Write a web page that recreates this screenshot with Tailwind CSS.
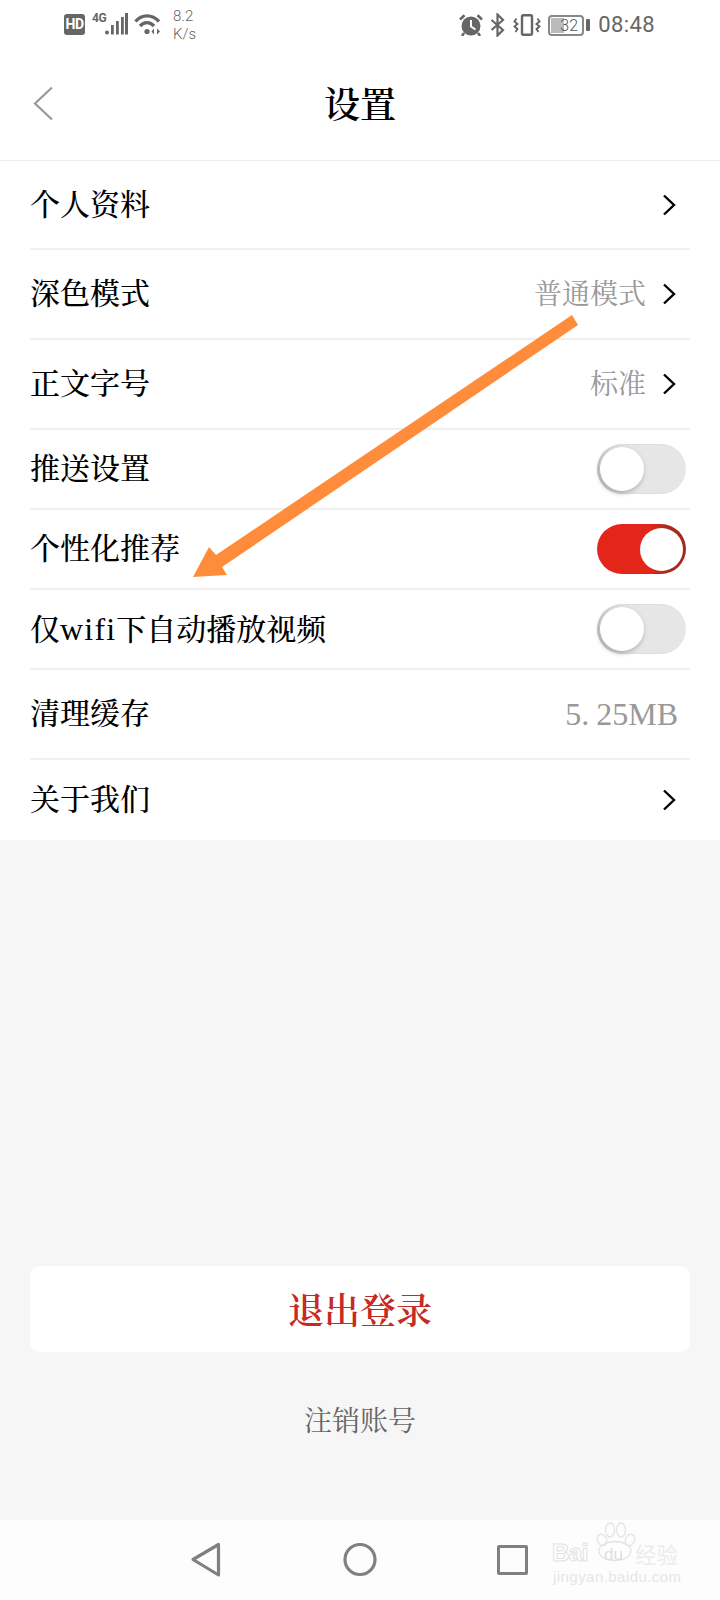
<!DOCTYPE html>
<html lang="zh">
<head>
<meta charset="utf-8">
<script src="https://cdn.jsdelivr.net/npm/@tailwindcss/browser@4"></script>
</head>
<body class="m-0">
<div class="relative w-[720px] h-[1600px] flex flex-col overflow-hidden bg-[#f6f6f6] font-['Liberation_Serif','Noto_Serif_CJK_SC','Noto_Sans_CJK_SC',serif] text-black">

  <!-- status bar -->
  <div class="h-[54px] bg-white flex items-start pt-[7px] text-[#666] font-['Roboto',sans-serif]">
    <div class="ml-[64px] flex items-start">
      <div class="mt-[7px] w-[21px] h-[21px] rounded-[3px] bg-[#666] text-white text-[14px] font-bold leading-[21px] text-center tracking-[-0.5px]">HD</div>
      <div class="ml-[7px] mt-[5px] w-[13px] text-[12px] leading-[13px] font-bold tracking-[-0.3px]">4G</div>
      <svg class="mt-[6px]" width="23" height="22" viewBox="13 0 23 22" fill="#666">
        <circle cx="15" cy="19.5" r="2"/>
        <rect x="19" y="12" width="2.8" height="9.5"/>
        <rect x="24" y="8" width="2.8" height="13.5"/>
        <rect x="29" y="4" width="2.8" height="17.5"/>
        <rect x="33" y="0" width="3" height="21.5"/>
      </svg>
      <svg class="ml-[6px] mt-[6px]" width="27" height="22" viewBox="0 0 27 22" fill="none" stroke="#666" stroke-width="3.4">
        <path d="M1.5 8.5 C8 1 18 1 25 8.5"/>
        <path d="M6 13 C10 8.5 16 8.5 20 13"/>
        <circle cx="13" cy="18.5" r="2.6" fill="#666" stroke="none"/>
        <path d="M20 15.5l-2.5 3 2.5 3zM23 15.5l3 3-3 3z" fill="#666" stroke="none"/>
      </svg>
      <div class="ml-[12px] w-[24px] text-[15px] leading-[18px] font-light">
        <div>8.2</div>
        <div>K/s</div>
      </div>
    </div>
    <div class="ml-auto mr-[65px] flex items-center h-[36px]">
      <svg width="24" height="22" viewBox="0 0 24 22" fill="#666">
        <circle cx="12" cy="12" r="9.5"/>
        <path d="M1 5.5 L5.5 1.2 M23 5.5 L18.5 1.2 M5 19 L3 22 M19 19 L21 22" stroke="#666" stroke-width="2.6" fill="none"/>
        <path d="M12 6V12.5L16.5 15.5" stroke="#fff" stroke-width="2" fill="none"/>
      </svg>
      <svg class="ml-[7px]" width="15" height="24" viewBox="0 0 15 24" fill="none" stroke="#666" stroke-width="2.2">
        <path d="M1.5 7 L13 17 L7.5 22.5 V1.5 L13 7 L1.5 17"/>
      </svg>
      <svg class="ml-[8px]" width="28" height="22" viewBox="0 0 28 22" fill="none" stroke="#666" stroke-width="2.4">
        <rect x="9" y="1.2" width="10" height="19.6" rx="1.5"/>
        <path d="M3.5 4.5 L1.5 7.5 L4.5 10 L1.5 12.5 L4.5 15 L2.5 18 M24.5 4.5 L26.5 7.5 L23.5 10 L26.5 12.5 L23.5 15 L25.5 18" stroke-width="1.9"/>
      </svg>
      <div class="relative ml-[7px] w-[36px] h-[21px] rounded-[4px] border-2 border-[#888]">
        <div class="absolute left-[1px] top-[1px] bottom-[1px] w-[13px] bg-[#bbb]"></div>
        <div class="absolute inset-0 pl-[6px] text-center text-[16px] leading-[17px] font-light text-[#555]">32</div>
      </div>
      <div class="ml-[2px] w-[4px] h-[12px] rounded-[1px] bg-[#666]"></div>
      <div class="ml-[8px] text-[22px] leading-none tracking-[0.4px]">08:48</div>
    </div>
  </div>

  <!-- header -->
  <div class="relative h-[107px] bg-white border-b border-[#eeeeee] flex items-center justify-center">
    <svg class="absolute left-[33px] top-[32px]" width="21" height="35" viewBox="0 0 21 35" fill="none" stroke="#999" stroke-width="2.2">
      <path d="M19 1.5 L2 17.5 L19 33.5"/>
    </svg>
    <div class="text-[36px] leading-none font-semibold mt-[-3px]">设置</div>
  </div>

  <!-- list -->
  <div class="bg-white px-[30px] h-[679px] flex flex-col text-[30px] font-medium">
    <div class="h-[89px] border-b-2 border-[#f0f0f0] flex items-center">
      <span class="leading-none">个人资料</span>
      <svg class="ml-auto mr-[14px]" width="14" height="22" viewBox="0 0 14 22" fill="none" stroke="#000" stroke-width="2.4"><path d="M2 1.5 L12 11 L2 20.5"/></svg>
    </div>
    <div class="h-[90px] border-b-2 border-[#f0f0f0] flex items-center">
      <span class="leading-none">深色模式</span>
      <span class="ml-auto mt-[2px] text-[28px] leading-none font-normal text-[#999]">普通模式</span>
      <svg class="ml-[16px] mr-[14px]" width="14" height="22" viewBox="0 0 14 22" fill="none" stroke="#000" stroke-width="2.4"><path d="M2 1.5 L12 11 L2 20.5"/></svg>
    </div>
    <div class="h-[90px] border-b-2 border-[#f0f0f0] flex items-center">
      <span class="leading-none">正文字号</span>
      <span class="ml-auto mt-[2px] text-[28px] leading-none font-normal text-[#999]">标准</span>
      <svg class="ml-[16px] mr-[14px]" width="14" height="22" viewBox="0 0 14 22" fill="none" stroke="#000" stroke-width="2.4"><path d="M2 1.5 L12 11 L2 20.5"/></svg>
    </div>
    <div class="h-[80px] border-b-2 border-[#f0f0f0] flex items-center">
      <span class="leading-none">推送设置</span>
      <div class="ml-auto mr-[4px] w-[89px] h-[50px] rounded-full bg-[#e6e6e6] shadow-[inset_2px_0_2px_rgba(0,0,0,0.12)] flex items-center">
        <div class="ml-[3px] w-[44px] h-[44px] rounded-full bg-white shadow-[-1px_2px_5px_rgba(0,0,0,0.28)]"></div>
      </div>
    </div>
    <div class="h-[80px] border-b-2 border-[#f0f0f0] flex items-center">
      <span class="leading-none">个性化推荐</span>
      <div class="ml-auto mr-[4px] w-[89px] h-[50px] rounded-full bg-linear-to-r from-[#e4261a] from-60% to-[#a8281e] to-80% flex items-center justify-end">
        <div class="mr-[3px] w-[43px] h-[43px] rounded-full bg-white"></div>
      </div>
    </div>
    <div class="h-[80px] border-b-2 border-[#f0f0f0] flex items-center">
      <span class="leading-none">仅<span class="text-[32px] tracking-[1.2px]">wifi</span>下自动播放视频</span>
      <div class="ml-auto mr-[4px] w-[89px] h-[50px] rounded-full bg-[#e6e6e6] shadow-[inset_2px_0_2px_rgba(0,0,0,0.12)] flex items-center">
        <div class="ml-[3px] w-[44px] h-[44px] rounded-full bg-white shadow-[-1px_2px_5px_rgba(0,0,0,0.28)]"></div>
      </div>
    </div>
    <div class="h-[90px] border-b-2 border-[#f0f0f0] flex items-center">
      <span class="leading-none">清理缓存</span>
      <span class="ml-auto mr-[12px] text-[32px] leading-none font-normal text-[#999]">5<span class="tracking-[7px]">.</span>25MB</span>
    </div>
    <div class="h-[80px] flex items-center">
      <span class="leading-none">关于我们</span>
      <svg class="ml-auto mr-[14px]" width="14" height="22" viewBox="0 0 14 22" fill="none" stroke="#000" stroke-width="2.4"><path d="M2 1.5 L12 11 L2 20.5"/></svg>
    </div>
  </div>

  <!-- actions -->
  <div class="flex-1 flex flex-col justify-end px-[30px] pb-[84px]">
    <div class="h-[86px] rounded-[10px] bg-white flex items-center justify-center text-[36px] leading-none font-semibold text-[#c62a22]"><span class="mt-[5px]">退出登录</span></div>
    <div class="mt-[56px] h-[28px] text-center text-[28px] leading-none text-[#666]">注销账号</div>
  </div>

  <!-- nav bar -->
  <div class="relative h-[80px] bg-[#fdfdfd]">
    <svg class="absolute left-[190px] top-[22px]" width="32" height="36" viewBox="0 0 32 36" fill="none" stroke="#808080" stroke-width="3.2" stroke-linejoin="round">
      <path d="M28.5 2.5 V33 L3 17.5 Z"/>
    </svg>
    <svg class="absolute left-[343px] top-[22px]" width="34" height="35" viewBox="0 0 34 35" fill="none" stroke="#808080" stroke-width="3.2">
      <circle cx="17" cy="17.5" r="15"/>
    </svg>
    <div class="absolute left-[497px] top-[25px] w-[31px] h-[30px] rounded-[2px] border-[3px] border-[#808080]"></div>

    <!-- watermark -->
    <svg class="absolute left-[596px] top-[2px]" width="40" height="40" viewBox="0 0 40 40" fill="none" stroke="#e4e4e4" stroke-width="1.3">
      <ellipse cx="6" cy="18" rx="4.5" ry="6" transform="rotate(-25 6 18)"/>
      <ellipse cx="14" cy="8" rx="4.5" ry="7"/>
      <ellipse cx="25" cy="8" rx="4.5" ry="7"/>
      <ellipse cx="34" cy="18" rx="4.5" ry="6" transform="rotate(25 34 18)"/>
      <ellipse cx="19" cy="29" rx="16" ry="9.5"/>
    </svg>
    <div class="absolute left-[552px] top-[19px] text-[24px] leading-[28px] font-bold text-white [-webkit-text-stroke:1px_#e2e2e2] font-['Liberation_Sans',sans-serif] tracking-[-0.5px]">Bai</div>
    <div class="absolute left-[604px] top-[25px] text-[17px] leading-[20px] text-[#dedede] font-['Liberation_Sans',sans-serif]">du</div>
    <div class="absolute left-[635px] top-[22px] text-[21.5px] leading-[24px] font-['Noto_Sans_CJK_SC',sans-serif] text-[#ececec]">经验</div>
    <div class="absolute left-[553px] top-[48px] text-[15px] leading-[18px] tracking-[0.45px] text-[#e6e6e6] font-['Liberation_Sans',sans-serif]">jingyan.baidu.com</div>
  </div>

  <!-- annotation arrow -->
  <svg class="absolute left-0 top-0 pointer-events-none" width="720" height="1600" viewBox="0 0 720 1600" fill="#ff8c3a">
    <path d="M572 315 L578 325 L222 567 L227 575 L193 577 L209 547 L216 555 Z"/>
  </svg>
</div>
</body>
</html>
